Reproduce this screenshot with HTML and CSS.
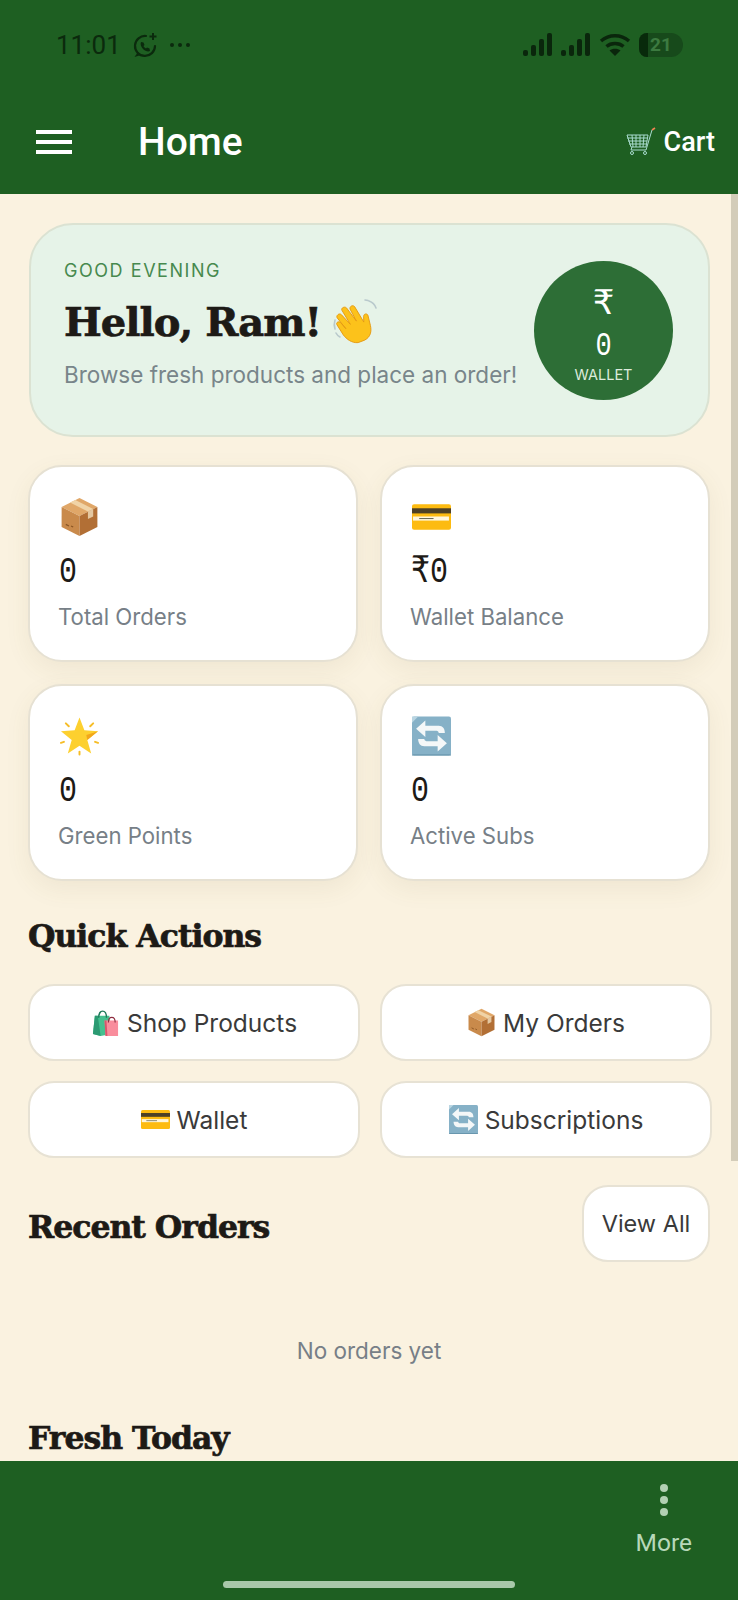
FILE: index.html
```html
<!DOCTYPE html>
<html lang="en">
<head>
    <meta charset="UTF-8">
    <meta name="viewport" content="width=device-width, initial-scale=1.0">
    <title>Home</title>
    <link rel="stylesheet" href="styles.css">
</head>
<body>
    <!-- Shared emoji drawings -->
    <svg class="sprite" aria-hidden="true">
        <symbol id="box" viewBox="0 0 36 38">
            <path d="M18 1 35 9.500 18 18 1 9.500Z" fill="#e0a768"/>
            <path d="M1 9.500 18 18V37L1 28.500Z" fill="#c98a4b"/>
            <path d="M35 9.500 18 18V37L35 28.500Z" fill="#b26f35"/>
            <path d="M9 5.300 26 13.800 31 11.300 14 2.800Z" fill="#f0d3a6"/>
            <path d="M26 13.800 31 11.300V18.500L26 21Z" fill="#e4c7a0"/>
            <path d="M5 26l3 1.500M10 27.500l2 1" stroke="#8a5524" stroke-width="1.200"/>
        </symbol>
        <symbol id="card" viewBox="0 0 38 25">
            <rect width="38" height="25" rx="2" fill="#fdbb11"/>
            <rect y="4" width="38" height="5" fill="#4d4026"/>
            <rect x="1" y="12" width="35" height="4" fill="#fff6dc"/>
            <path d="M7 14h14" stroke="#6b6b55" stroke-width="1"/>
        </symbol>
        <symbol id="star" viewBox="0 0 40 40">
            <path d="M20 1 25 14 39 15 28 24 32 38 20 30 8 38 12 24 1 15 15 14Z" fill="#fdd02f"/>
            <path d="M39 15 28 24 27 19Z" fill="#f2a71b"/>
            <path d="M20 36v3M6 7l3 3M34 7l-3 3M1 27l3-1M39 27l-3-1" stroke="#f6bd27" stroke-width="2" stroke-linecap="round"/>
        </symbol>
        <symbol id="arrows" viewBox="0 0 38 38">
            <rect width="38" height="38" rx="2" fill="#86b1c7"/>
            <path d="M0 0h6L0 6Z" fill="#b9d5e2"/>
            <path d="M0 37h38v1H0Z" fill="#5f8ea6"/>
            <path d="M4 12 13 4v5h13c4 0 6 3 6 7h-6c0-1-1-2-2-2H13v6Z" fill="#f4f7f8"/>
            <path d="M34 26 25 34v-5H12c-4 0-6-3-6-7h6c0 1 1 2 2 2h11v-6Z" fill="#f4f7f8"/>
        </symbol>
        <symbol id="bags" viewBox="0 0 28 30">
            <path d="M3 8h15l2 19-11 2-8-2Z" fill="#45c08f"/>
            <path d="M1 27 3 8h3l3 21Z" fill="#2c9a72"/>
            <path d="M7 10C7 1 15 1 15 10" fill="none" stroke="#1f7a5a" stroke-width="1.400"/>
            <path d="M13 13h14v16H14Z" fill="#f98d9c"/>
            <path d="M13 13h2l1 16h-2Z" fill="#d8566c"/>
            <path d="M17 15C17 8 24 8 24 15" fill="none" stroke="#8f2d40" stroke-width="1.200"/>
        </symbol>
    </svg>

    <div class="phone">
        <header class="top">
            <div class="status-bar">
                <div class="status-left">
                    <span class="time">11:01</span>
                    <svg class="wa-icon" viewBox="0 0 26 26" width="26" height="26">
                        <path d="M14 4A10 10 0 1 0 23 14" fill="none" stroke="#0b2a0d" stroke-width="2.200" stroke-linecap="round"/>
                        <path d="M6 20 2.500 25 9 23Z" fill="#0b2a0d"/>
                        <path d="M9 10c-1 2 0 5 2 7s5 3 7 2l-.5-2.500-2.500-1-1 1c-1-.5-2-1.500-2.500-2.500l1-1-1-2.500Z" fill="#0b2a0d"/>
                        <path d="M21 1v7M17.500 4.500h7" stroke="#0b2a0d" stroke-width="2"/>
                    </svg>
                    <span class="dots-h"><i></i><i></i><i></i></span>
                </div>
                <div class="status-right">
                    <svg viewBox="0 0 30 24" width="30" height="24" fill="#0a260c">
                        <rect x="0" y="17" width="5" height="6" rx="2"/><rect x="8" y="12" width="5" height="11" rx="2"/><rect x="16" y="6" width="5" height="17" rx="2"/><rect x="24" y="0" width="5" height="23" rx="2"/>
                    </svg>
                    <svg viewBox="0 0 30 24" width="30" height="24" fill="#0a260c">
                        <rect x="0" y="17" width="5" height="6" rx="2"/><rect x="8" y="12" width="5" height="11" rx="2"/><rect x="16" y="6" width="5" height="17" rx="2"/><rect x="24" y="0" width="5" height="23" rx="2"/>
                    </svg>
                    <svg class="wifi" viewBox="0 0 32 24" width="32" height="24" fill="none" stroke="#0a260c" stroke-width="3.400">
                        <path d="M2 8C10 1 22 1 30 8"/>
                        <path d="M7.500 13.500C12 9.500 20 9.500 24.500 13.500"/>
                        <path d="M16 23 10.500 17.500C13.500 15 18.500 15 21.500 17.500Z" fill="#0a260c" stroke="none"/>
                    </svg>
                    <div class="battery"><span class="battery-fill"></span><span class="battery-text">21</span></div>
                </div>
            </div>
            <div class="toolbar">
                <div class="burger"><i></i><i></i><i></i></div>
                <div class="page-title">Home</div>
                <div class="cart">
                    <svg viewBox="0 0 30 30" width="30" height="30" fill="none" stroke="#a9dcd0" stroke-width="1">
                        <path d="M1 8h21l-2 12H5Z"/>
                        <path d="M1 11h20M2 14h19M3 17h17M6 8l1 12M10 8v12M14 8v12M18 8l-1 12"/>
                        <path d="M20 23H5l1-3M20 23 26 3"/>
                        <path d="M26 3 29 1" stroke="#ef8354" stroke-width="1.600"/>
                        <circle cx="6" cy="26" r="1.500"/><circle cx="19" cy="26" r="1.500"/>
                    </svg>
                    <span>Cart</span>
                </div>
            </div>
        </header>

        <main class="content">
            <div class="scroll-thumb"></div>

            <!-- Greeting -->
            <section class="hero">
                <div class="hero-text">
                    <div class="greeting">GOOD EVENING</div>
                    <h1>Hello, Ram!
                        <svg class="wave" viewBox="0 0 46 46" width="46" height="46">
                            <path d="M3 30C2 27 2 24 3 21M8 38C6 37 5 36 4 34M37 2c3 1 6 4 7 7M33 1c1 0 2 0 3 .500" fill="none" stroke="#b9c9cc" stroke-width="1.600" stroke-linecap="round"/>
                            <g transform="rotate(-28 24 26) translate(3 3) scale(.86)">
                                <path d="M17 46C10 43 7 36 6 30L5 16c0-3 4-3 5 0l2 9L9 9c0-3 5-4 6-1l4 15-1-19c0-3 5-3 6 0l3 19V7c1-3 5-3 6 0l1 21 3-6c2-3 5-1 5 1l-3 12c-2 7-6 12-14 12Z" fill="#fcc21b" stroke="#e59a13" stroke-width="1"/>
                            </g>
                        </svg>
                    </h1>
                    <p>Browse fresh products and place an order!</p>
                </div>
                <div class="wallet-badge">
                    <span class="wallet-rupee">₹</span>
                    <span class="wallet-amount">0</span>
                    <span class="wallet-label">WALLET</span>
                </div>
            </section>

            <!-- Stats -->
            <section class="stats">
                <div class="stat-card">
                    <svg class="stat-icon"><use href="#box"/></svg>
                    <div class="stat-value">0</div>
                    <div class="stat-label">Total Orders</div>
                </div>
                <div class="stat-card">
                    <svg class="stat-icon"><use href="#card"/></svg>
                    <div class="stat-value">₹0</div>
                    <div class="stat-label">Wallet Balance</div>
                </div>
                <div class="stat-card">
                    <svg class="stat-icon"><use href="#star"/></svg>
                    <div class="stat-value">0</div>
                    <div class="stat-label">Green Points</div>
                </div>
                <div class="stat-card">
                    <svg class="stat-icon"><use href="#arrows"/></svg>
                    <div class="stat-value">0</div>
                    <div class="stat-label">Active Subs</div>
                </div>
            </section>

            <h2 class="quick-title">Quick Actions</h2>
            <section class="actions">
                <button class="action-btn"><svg class="btn-icon"><use href="#bags"/></svg>Shop Products</button>
                <button class="action-btn"><svg class="btn-icon"><use href="#box"/></svg>My Orders</button>
                <button class="action-btn"><svg class="btn-icon"><use href="#card"/></svg>Wallet</button>
                <button class="action-btn"><svg class="btn-icon"><use href="#arrows"/></svg>Subscriptions</button>
            </section>

            <div class="section-head">
                <h2>Recent Orders</h2>
                <button class="view-all">View All</button>
            </div>
            <p class="empty">No orders yet</p>
            <h2 class="fresh-title">Fresh Today</h2>
        </main>

        <nav class="bottom-nav">
            <div class="more">
                <div class="dots-v"><i></i><i></i><i></i></div>
                <span>More</span>
            </div>
            <div class="home-bar"></div>
        </nav>
    </div>
</body>
</html>
```
FILE: styles.css
```css
* {
    box-sizing: border-box;
}

body {
    margin: 0;
    font-family: "Inter", "Noto Sans", sans-serif;
    background: #faf2e0;
}

.sprite {
    display: none;
}

.phone {
    display: flex;
    flex-direction: column;
    height: 1600px;
    overflow: hidden;
}

/* Header */
.top {
    height: 194px;
    flex-shrink: 0;
    background: #1e5f22;
    font-family: "Roboto", sans-serif;
}

.status-bar {
    display: flex;
    justify-content: space-between;
    align-items: center;
    height: 90px;
    padding: 0 55px 0 56px;
}

.status-left,
.status-right {
    display: flex;
    align-items: center;
}

.time {
    font-size: 26px;
    color: #0b2a0d;
}

.wa-icon {
    margin-left: 11px;
}

.dots-h {
    display: flex;
    gap: 4px;
    margin-left: 12px;
}

.dots-h i {
    width: 4px;
    height: 4px;
    border-radius: 50%;
    background: #0b2a0d;
}

.status-right {
    gap: 8px;
}

.battery {
    position: relative;
    width: 44px;
    height: 24px;
    border-radius: 8px 12px 12px 8px;
    background: #174a1b;
    overflow: hidden;
}

.battery-fill {
    position: absolute;
    left: 0;
    top: 0;
    bottom: 0;
    width: 9px;
    background: #082a0b;
}

.battery-text {
    position: absolute;
    left: 11px;
    top: 1px;
    font-size: 19px;
    font-weight: 700;
    line-height: 22px;
    color: #3c7a40;
}

.toolbar {
    display: flex;
    align-items: center;
    height: 104px;
    padding: 0 23px 0 36px;
}

.burger {
    display: flex;
    flex-direction: column;
    gap: 6px;
    width: 36px;
}

.burger i {
    height: 4px;
    background: #fff;
}

.page-title {
    margin-left: 66px;
    font-size: 39px;
    font-weight: 500;
    color: #fff;
}

.cart {
    display: flex;
    align-items: center;
    gap: 8px;
    margin-left: auto;
    font-size: 27px;
    font-weight: 500;
    color: #fff;
}

/* Scrolling content */
.content {
    position: relative;
    flex: 1;
    min-height: 0;
    overflow: hidden;
    padding: 29px 28px 0 28px;
}

.scroll-thumb {
    position: absolute;
    top: 0;
    right: 0;
    width: 7px;
    height: 967px;
    background: #d3ccb9;
}

h1,
h2 {
    margin: 0;
    font-family: "DejaVu Serif", serif;
    font-weight: 700;
    color: #1d1a16;
    -webkit-text-stroke: 0.7px #1d1a16;
}

.hero {
    display: flex;
    justify-content: space-between;
    align-items: center;
    height: 214px;
    margin-left: 1px;
    padding: 0 35px 0 33px;
    background: #e6f3e8;
    border: 2px solid #dbe2d2;
    border-radius: 44px;
}

.hero-text {
    padding-bottom: 10px;
}

.greeting {
    font-size: 18px;
    line-height: 22px;
    letter-spacing: 1.55px;
    color: #47894e;
}

.hero h1 {
    display: flex;
    align-items: center;
    gap: 11px;
    margin-top: 15px;
    font-size: 40px;
    line-height: 50px;
    letter-spacing: -1px;
    white-space: nowrap;
}

.wave {
    flex-shrink: 0;
}

.hero p {
    margin: 13px 0 0;
    font-size: 22.500px;
    line-height: 30px;
    white-space: nowrap;
    color: #78858a;
}

.wallet-badge {
    display: flex;
    flex-direction: column;
    align-items: center;
    flex-shrink: 0;
    width: 139px;
    height: 139px;
    padding-top: 21px;
    border-radius: 50%;
    background: #2d6e36;
    color: #fff;
}

.wallet-rupee {
    font-family: "DejaVu Sans", sans-serif;
    font-size: 34px;
    line-height: 40px;
}

.wallet-amount {
    margin-top: 10px;
    font-family: "Liberation Mono", monospace;
    font-size: 27px;
    line-height: 28px;
    transform: scaleY(1.25);
}

.wallet-label {
    margin-top: 5px;
    font-size: 14.500px;
    line-height: 20px;
    color: #dcebdc;
}

.stats {
    display: grid;
    grid-template-columns: 330px 330px;
    column-gap: 22px;
    row-gap: 22px;
    margin-top: 28px;
}

.stat-card {
    height: 197px;
    padding: 30px 28px 0 29px;
    background: #fff;
    border: 2px solid #e6e1d3;
    border-radius: 34px;
    box-shadow: 0 8px 24px rgba(120, 100, 50, 0.08);
}

.stat-icon {
    display: block;
    width: 39px;
    height: 40px;
    margin-left: 1px;
}

.stat-value {
    margin-top: 18px;
    font-family: "Liberation Mono", "DejaVu Sans", monospace;
    font-size: 30px;
    line-height: 34px;
    color: #1d1a16;
    transform: scaleY(1.22);
}

.stat-label {
    margin-top: 14px;
    margin-left: -1px;
    font-size: 22.200px;
    line-height: 28px;
    color: #777f87;
}

.quick-title {
    margin-top: 37px;
    font-size: 31.500px;
    line-height: 36px;
    letter-spacing: -1px;
}

.actions {
    display: grid;
    grid-template-columns: 332px 332px;
    column-gap: 20px;
    row-gap: 20px;
    margin-top: 30px;
}

.action-btn,
.view-all {
    font-family: "Inter", sans-serif;
    font-size: 24.500px;
    color: #3a3a3a;
    background: #fff;
    border: 2px solid #e7e2d4;
}

.action-btn {
    display: flex;
    justify-content: center;
    align-items: center;
    gap: 7px;
    height: 77px;
    padding: 0;
    border-radius: 26px;
}

.btn-icon {
    width: 29px;
    height: 29px;
}

.section-head {
    display: flex;
    justify-content: space-between;
    align-items: center;
    margin-top: 27px;
}

.section-head h2 {
    padding-top: 6px;
    font-size: 31.500px;
    letter-spacing: -1px;
}

.view-all {
    width: 128px;
    height: 77px;
    padding: 0;
    font-size: 23.500px;
    border-radius: 26px;
}

.empty {
    margin: 75px 0 0;
    font-size: 22.500px;
    line-height: 28px;
    text-align: center;
    color: #777f87;
}

.fresh-title {
    margin-top: 55px;
    font-size: 31.500px;
    line-height: 36px;
    letter-spacing: -1px;
}

/* Bottom navigation */
.bottom-nav {
    position: relative;
    height: 139px;
    flex-shrink: 0;
    background: #1e5f22;
    font-family: "Roboto", sans-serif;
}

.more {
    display: flex;
    flex-direction: column;
    align-items: center;
    position: absolute;
    top: 23px;
    right: 46px;
    color: #b7d8b9;
    font-size: 24.500px;
}

.dots-v {
    display: flex;
    flex-direction: column;
    gap: 4px;
    margin-bottom: 12px;
}

.dots-v i {
    width: 8px;
    height: 8px;
    border-radius: 50%;
    background: #b2d0b3;
}

.home-bar {
    position: absolute;
    left: 223px;
    bottom: 12px;
    width: 292px;
    height: 7px;
    border-radius: 4px;
    background: #a8c8aa;
}
```
